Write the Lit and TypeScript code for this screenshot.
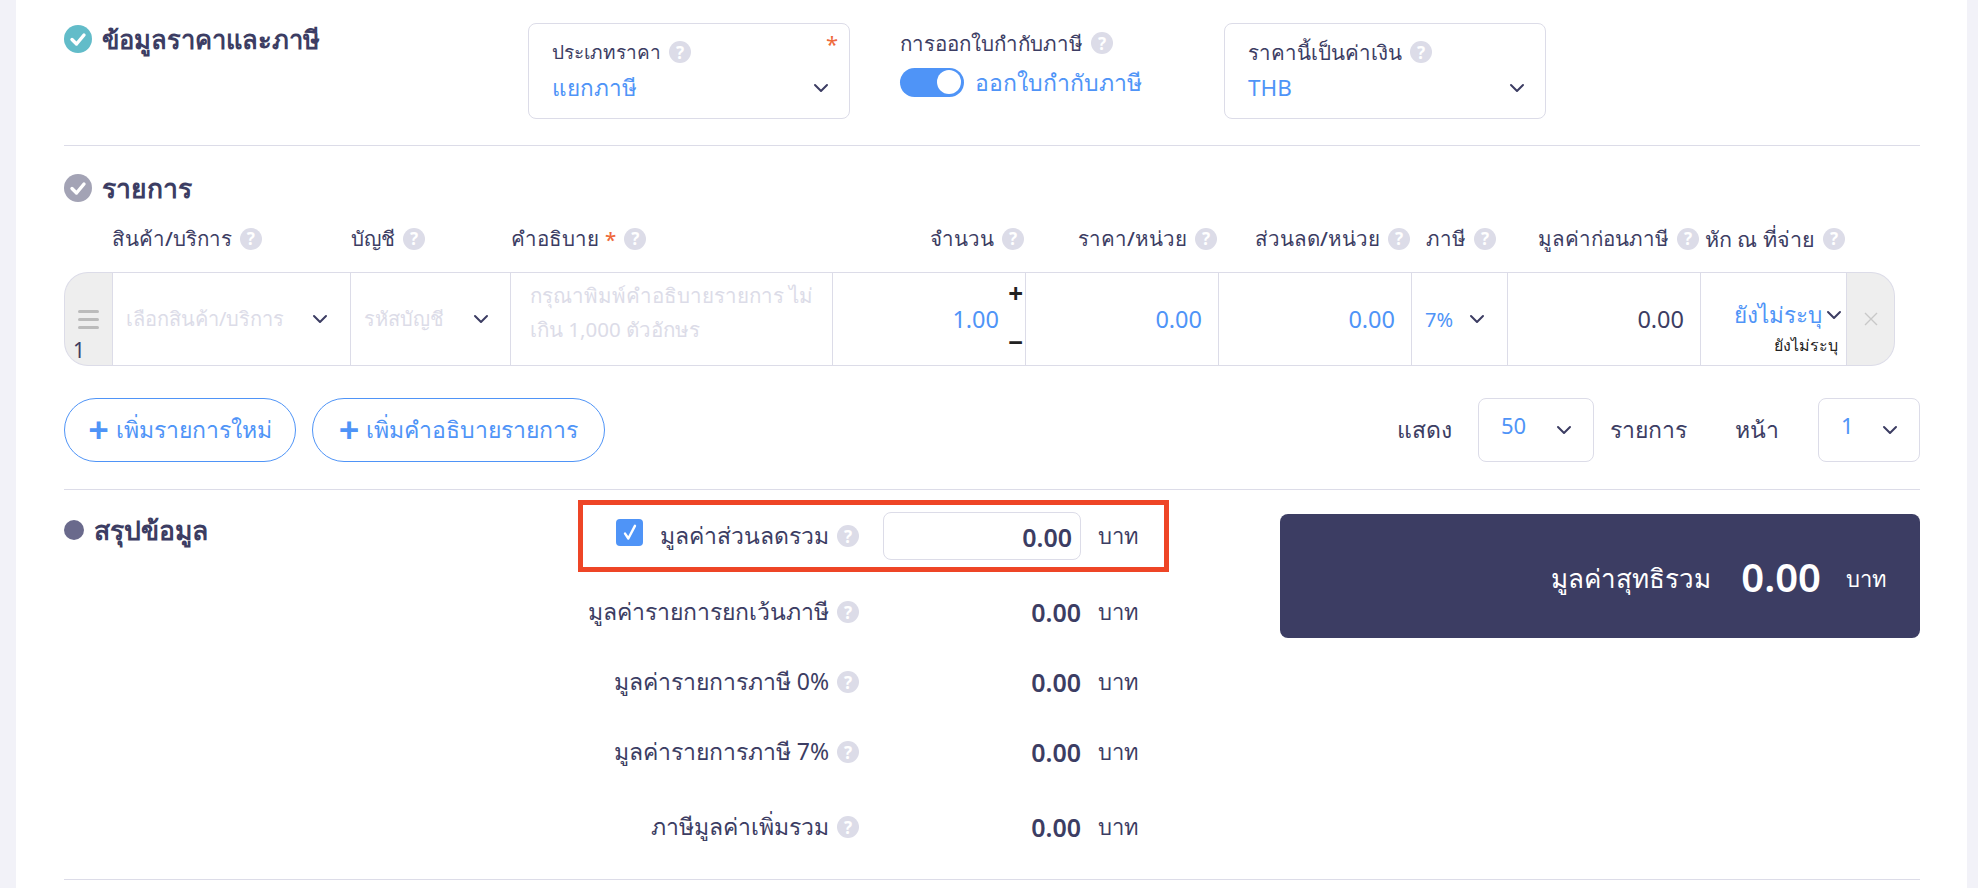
import { LitElement, html, css } from 'lit';
import { customElement } from 'lit/decorators.js';

const help = html`<span class="help">?</span>`;

const chevron = html`<svg class="chev" viewBox="0 0 16 10" width="16" height="10"><path d="M2 2l6 6 6-6" fill="none" stroke="currentColor" stroke-width="2" stroke-linecap="round" stroke-linejoin="round"/></svg>`;

const check = html`<svg viewBox="0 0 28 28" width="28" height="28"><path d="M8 14.5l4.5 4.5L20 10" fill="none" stroke="#fff" stroke-width="3.4" stroke-linecap="round" stroke-linejoin="round"/></svg>`;

const headers = [
  { label: 'สินค้า/บริการ', cls: 'start' },
  { label: 'บัญชี', cls: 'start' },
  { label: 'คำอธิบาย', cls: 'start', req: true },
  { label: 'จำนวน', cls: 'end' },
  { label: 'ราคา/หน่วย', cls: 'end' },
  { label: 'ส่วนลด/หน่วย', cls: 'end' },
  { label: 'ภาษี', cls: 'center' },
  { label: 'มูลค่าก่อนภาษี', cls: 'end' },
  { label: 'หัก ณ ที่จ่าย', cls: 'end wide' },
];

const summary = ['มูลค่ารายการยกเว้นภาษี', 'มูลค่ารายการภาษี 0%', 'มูลค่ารายการภาษี 7%', 'ภาษีมูลค่าเพิ่มรวม'];

@customElement('app-root')
export class AppRoot extends LitElement {
  static styles = css`
    :host {
      display: block;
      height: 888px;
      overflow: hidden;
      background: #f2f2f8;
      font-family: 'Noto Sans', 'Open Sans', sans-serif;
      color: #3c3d63;
      font-size: 20px;
    }
    .card {
      margin-left: 16px;
      width: 1951px;
      height: 888px;
      box-sizing: border-box;
      background: #fff;
      padding: 0 47px 0 48px;
    }
    .top {
      display: flex;
      height: 146px;
      box-sizing: border-box;
      border-bottom: 1px solid #dcdce8;
      padding-top: 23px;
    }
    .title {
      display: flex;
      align-items: center;
      gap: 10px;
      font-size: 26.5px;
      font-weight: 600;
      line-height: 28px;
      height: 32px;
    }
    .badge {
      width: 28px;
      height: 28px;
      border-radius: 50%;
      flex: none;
      background: #62bcc9;
    }
    .badge.grey {
      background: #a3a3b5;
    }
    .dot {
      width: 20px;
      height: 20px;
      border-radius: 50%;
      background: #6a6a8c;
      flex: none;
    }
    .top-title {
      width: 464px;
    }
    .top-title .title {
      font-size: 25.5px;
    }
    .field {
      position: relative;
      width: 322px;
      height: 96px;
      box-sizing: border-box;
      border: 1px solid #dcdce8;
      border-radius: 8px;
      padding: 15px 20px 0 23px;
    }
    .label {
      display: flex;
      align-items: center;
      gap: 8px;
      font-weight: 500;
      font-size: 19px;
      line-height: 26px;
    }
    .label.big {
      font-size: 20.5px;
    }
    .value {
      display: flex;
      align-items: center;
      justify-content: space-between;
      color: #4f94f7;
      font-size: 22.5px;
      line-height: 30px;
      margin-top: 8px;
    }
    .chev {
      color: #3c3d63;
      flex: none;
    }
    .req {
      position: absolute;
      right: 11px;
      top: 8px;
      color: #ee6a3c;
      font-size: 22px;
      line-height: 22px;
    }
    .help {
      display: inline-flex;
      align-items: center;
      justify-content: center;
      width: 22px;
      height: 22px;
      border-radius: 50%;
      background: #dcdce8;
      color: #fff;
      font-size: 17px;
      font-weight: 700;
      line-height: 1;
      flex: none;
    }
    .tax {
      margin-left: 50px;
      width: 0;
      flex: none;
      padding-top: 7px;
    }
    .tax .label {
      white-space: nowrap;
    }
    .toggle-row {
      display: flex;
      align-items: center;
      gap: 11px;
      margin-top: 7px;
      color: #4f94f7;
      font-size: 23px;
      white-space: nowrap;
    }
    .toggle-row span:last-child {
      padding-top: 2px;
    }
    .toggle {
      width: 64px;
      height: 29px;
      border-radius: 15px;
      background: #4f94f7;
      display: flex;
      justify-content: flex-end;
      align-items: center;
      padding-right: 3px;
      box-sizing: border-box;
      flex: none;
    }
    .toggle i {
      display: block;
      width: 24px;
      height: 24px;
      border-radius: 50%;
      background: #fff;
    }
    .tax-gap {
      width: 324px;
      flex: none;
    }
    .items {
      padding-top: 26px;
    }
    .grid {
      display: grid;
      grid-template-columns: 48px 239px 160px 322px 193px 193px 193px 96px 193px 146px 48px;
    }
    .head {
      height: 67px;
      margin-top: 1px;
      align-items: center;
      font-weight: 500;
      font-size: 20.5px;
    }
    .h {
      display: flex;
      align-items: center;
      gap: 8px;
      white-space: nowrap;
    }
    .h.end {
      justify-content: flex-end;
      padding-right: 2px;
    }
    .h.center {
      padding-left: 14px;
    }
    .h.wide {
      font-size: 21.5px;
    }
    .h em {
      color: #ee6a3c;
      font-style: normal;
      margin-left: -2px;
    }
    .row {
      height: 94px;
    }
    .handle,
    .close {
      background: #eeeeee;
      border: 1px solid #dcdce8;
      box-sizing: border-box;
    }
    .handle {
      border-radius: 24px 0 0 24px;
      border-right: 0;
    }
    .close {
      border-radius: 0 24px 24px 0;
      border-left: 0;
      display: flex;
      align-items: center;
      justify-content: center;
    }
    .bars {
      display: flex;
      flex-direction: column;
      gap: 5px;
      margin: 37px 0 0 13px;
      width: 21px;
    }
    .bars i {
      display: block;
      height: 3px;
      background: #bbbbbb;
      border-radius: 2px;
    }
    .num {
      font-size: 21px;
      line-height: 22px;
      margin: 10px 0 0 8px;
    }
    .cell {
      border: 1px solid #dcdce8;
      border-width: 1px 1px 1px 0;
      box-sizing: border-box;
      display: flex;
      align-items: center;
      position: relative;
    }
    .cell.first {
      border-left-width: 1px;
    }
    .cell.pick {
      justify-content: space-between;
      padding: 0 21px 0 13px;
      color: #dcdce8;
      white-space: nowrap;
    }
    .cell.first.pick {
      padding-right: 22px;
    }
    .cell.desc {
      padding: 0 6px 14px 19px;
      color: #dcdce8;
      font-size: 20.5px;
      line-height: 34px;
    }
    .cell.num-cell {
      justify-content: flex-end;
      padding-right: 16px;
      color: #4f94f7;
      font-size: 23.5px;
    }
    .cell.qty {
      padding-right: 26px;
    }
    .cell.plain {
      color: #3c3d63;
    }
    .step {
      position: absolute;
      right: 2px;
      font-size: 26px;
      font-weight: 700;
      color: #222;
      line-height: 20px;
    }
    .step.plus {
      top: 10px;
    }
    .step.minus {
      bottom: 13px;
    }
    .cell.vat {
      justify-content: space-between;
      padding: 0 22px 0 13px;
      color: #4f94f7;
    }
    .cell.wht {
      flex-direction: column;
      align-items: flex-end;
      justify-content: flex-start;
      padding: 27px 4px 0 0;
    }
    .wht-top {
      display: flex;
      align-items: center;
      gap: 4px;
      color: #4f94f7;
      font-size: 22.5px;
      line-height: 30px;
      white-space: nowrap;
    }
    .wht-sub {
      font-size: 16px;
      line-height: 20px;
      color: #222;
      margin: 5px 4px 0 0;
      white-space: nowrap;
    }
    .actions {
      display: flex;
      align-items: center;
      height: 64px;
      margin-top: 32px;
      padding-bottom: 27px;
      border-bottom: 1px solid #dcdce8;
    }
    .btn {
      display: flex;
      align-items: center;
      justify-content: center;
      gap: 7px;
      height: 64px;
      box-sizing: border-box;
      border: 1px solid #4f94f7;
      border-radius: 32px;
      color: #4f94f7;
      font-size: 23px;
      white-space: nowrap;
      width: 232px;
      margin-right: 16px;
    }
    .btn.wide {
      width: 293px;
    }
    .btn b {
      font-size: 36px;
      line-height: 1;
    }
    .spacer {
      flex: 1;
    }
    .pager {
      font-size: 23px;
      white-space: nowrap;
    }
    .pick-box {
      display: flex;
      align-items: center;
      justify-content: space-between;
      height: 64px;
      box-sizing: border-box;
      border: 1px solid #dcdce8;
      border-radius: 8px;
      color: #4f94f7;
      font-size: 22px;
      padding: 0 21px 10px 22px;
      margin: 0 16px 0 26px;
      width: 116px;
    }
    .pick-box .chev {
      margin-top: 10px;
    }
    .pick-box.small {
      width: 102px;
      margin: 0 0 0 39px;
      padding-left: 22px;
    }
    .gap-left {
      margin-left: 48px;
    }
    .summary {
      display: flex;
      height: 390px;
      box-sizing: border-box;
      border-bottom: 1px solid #dcdce8;
      padding-top: 10px;
    }
    .sum-title {
      width: 514px;
      padding-top: 14px;
    }
    .rows {
      width: 591px;
      flex: none;
    }
    .line {
      display: grid;
      grid-template-columns: 281px 222px 88px;
      align-items: center;
      height: 48px;
      margin-top: 22px;
      white-space: nowrap;
    }
    .line:nth-child(2) {
      margin-top: 16px;
    }
    .line:last-child {
      margin-top: 27px;
    }
    .line.boxed {
      grid-template-columns: 276px 222px 83px;
      height: 72px;
      margin-top: 0;
      border: 5px solid #ee4526;
      box-sizing: border-box;
    }
    .line-label {
      display: flex;
      align-items: center;
      justify-content: flex-end;
      gap: 8px;
      font-size: 23px;
    }
    .line-label .box {
      width: 27px;
      height: 27px;
      border-radius: 4px;
      background: #4f94f7;
      display: flex;
      align-items: center;
      justify-content: center;
      margin: 0 9px 7px 0;
      flex: none;
    }
    .line-value {
      text-align: right;
      font-weight: 600;
      font-size: 25px;
      justify-self: end;
      width: 198px;
    }
    .line-value.input {
      height: 48px;
      box-sizing: border-box;
      border: 1px solid #dcdce8;
      border-radius: 8px;
      padding: 0 8px;
      line-height: 48px;
    }
    .line-unit {
      font-size: 22px;
      padding-left: 17px;
    }
    .total {
      width: 640px;
      height: 124px;
      margin: 14px 0 0 auto;
      background: #3c3d63;
      border-radius: 8px;
      color: #fff;
      display: flex;
      align-items: center;
      justify-content: flex-end;
      padding-right: 33px;
      box-sizing: border-box;
      font-size: 22px;
      white-space: nowrap;
    }
    .total span {
      font-size: 26px;
      padding-top: 4px;
    }
    .total i {
      font-style: normal;
      padding-top: 6px;
    }
    .total b {
      font-size: 40px;
      font-weight: 600;
      margin: 0 25px 0 30px;
    }
  `;

  render() {
    return html`
      <div class="card">
        <div class="top">
          <div class="top-title">
            <div class="title"><span class="badge">${check}</span>ข้อมูลราคาและภาษี</div>
          </div>
          <div class="field">
            <span class="req">*</span>
            <div class="label">ประเภทราคา ${help}</div>
            <div class="value">แยกภาษี ${chevron}</div>
          </div>
          <div class="tax">
            <div class="label big">การออกใบกำกับภาษี ${help}</div>
            <div class="toggle-row"><span class="toggle"><i></i></span><span>ออกใบกำกับภาษี</span></div>
          </div>
          <div class="tax-gap"></div>
          <div class="field">
            <div class="label big">ราคานี้เป็นค่าเงิน ${help}</div>
            <div class="value">THB ${chevron}</div>
          </div>
        </div>

        <div class="items">
          <div class="title"><span class="badge grey">${check}</span>รายการ</div>
          <div class="grid head">
            <span></span>
            ${headers.map(
              (h) => html`<div class="h ${h.cls}">${h.label}${h.req ? html`<em>*</em>` : ''} ${help}</div>`
            )}
          </div>
          <div class="grid row">
            <div class="handle">
              <div class="bars"><i></i><i></i><i></i></div>
              <div class="num">1</div>
            </div>
            <div class="cell first pick">เลือกสินค้า/บริการ ${chevron}</div>
            <div class="cell pick">รหัสบัญชี ${chevron}</div>
            <div class="cell desc">กรุณาพิมพ์คำอธิบายรายการ ไม่เกิน 1,000 ตัวอักษร</div>
            <div class="cell num-cell qty">
              1.00
              <span class="step plus">+</span>
              <span class="step minus">−</span>
            </div>
            <div class="cell num-cell">0.00</div>
            <div class="cell num-cell">0.00</div>
            <div class="cell vat">7% ${chevron}</div>
            <div class="cell num-cell plain">0.00</div>
            <div class="cell wht">
              <div class="wht-top">ยังไม่ระบุ ${chevron}</div>
              <div class="wht-sub">ยังไม่ระบุ</div>
            </div>
            <div class="close">
              <svg viewBox="0 0 14 14" width="14" height="14"><path d="M1 1l12 12M13 1L1 13" fill="none" stroke="#c8c8c8" stroke-width="1.4"/></svg>
            </div>
          </div>
          <div class="actions">
            <div class="btn"><b>+</b>เพิ่มรายการใหม่</div>
            <div class="btn wide"><b>+</b>เพิ่มคำอธิบายรายการ</div>
            <span class="spacer"></span>
            <span class="pager">แสดง</span>
            <div class="pick-box">50 ${chevron}</div>
            <span class="pager">รายการ</span>
            <span class="pager gap-left">หน้า</span>
            <div class="pick-box small">1 ${chevron}</div>
          </div>
        </div>

        <div class="summary">
          <div class="sum-title">
            <div class="title"><span class="dot"></span>สรุปข้อมูล</div>
          </div>
          <div class="rows">
            <div class="line boxed">
              <div class="line-label">
                <span class="box"
                  ><svg viewBox="0 0 20 20" width="22" height="22"><path d="M5.5 10.5l3 4.5L14.5 3.5" fill="none" stroke="#fff" stroke-width="2.2" stroke-linecap="round" stroke-linejoin="round"/></svg></span
                >
                มูลค่าส่วนลดรวม ${help}
              </div>
              <div class="line-value input">0.00</div>
              <div class="line-unit">บาท</div>
            </div>
            ${summary.map(
              (s) => html`<div class="line">
                <div class="line-label">${s} ${help}</div>
                <div class="line-value">0.00</div>
                <div class="line-unit">บาท</div>
              </div>`
            )}
          </div>
          <div class="total"><span>มูลค่าสุทธิรวม</span><b>0.00</b><i>บาท</i></div>
        </div>
      </div>
    `;
  }
}
